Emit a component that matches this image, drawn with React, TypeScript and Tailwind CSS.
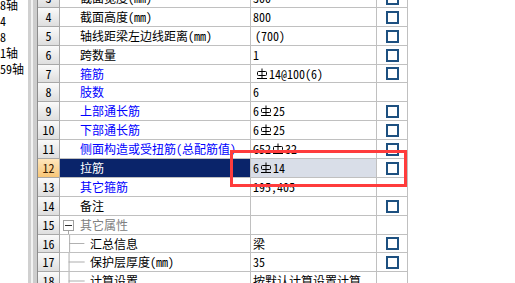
import React from "react";

type Row = {
  n: number;
  name: string;
  value: string;
  cb: boolean;
  h: string;
  kind?: "blue" | "sel" | "group" | "child" | "plain";
  vpad?: string;
};

const rows: Row[] = [
  { n: 3, name: "截面宽度(mm)", value: "300", cb: true, h: "h-[19px]" },
  { n: 4, name: "截面高度(mm)", value: "800", cb: true, h: "h-[19px]" },
  { n: 5, name: "轴线距梁左边线距离(mm)", value: "(700)", cb: true, h: "h-[19px]", vpad: "pl-[4px]" },
  { n: 6, name: "跨数量", value: "1", cb: true, h: "h-[19px]" },
  { n: 7, name: "箍筋", value: "#14@100(6)", cb: true, h: "h-[18px]", kind: "blue", vpad: "pl-[4px]" },
  { n: 8, name: "肢数", value: "6", cb: false, h: "h-[19px]", kind: "blue" },
  { n: 9, name: "上部通长筋", value: "6#25", cb: true, h: "h-[19px]", kind: "blue" },
  { n: 10, name: "下部通长筋", value: "6#25", cb: true, h: "h-[19px]", kind: "blue" },
  { n: 11, name: "侧面构造或受扭筋(总配筋值)", value: "G52#32", cb: true, h: "h-[19px]", kind: "blue" },
  { n: 12, name: "拉筋", value: "6#14", cb: true, h: "h-[19px]", kind: "sel" },
  { n: 13, name: "其它箍筋", value: "195,405", cb: false, h: "h-[19px]", kind: "blue" },
  { n: 14, name: "备注", value: "", cb: true, h: "h-[19px]" },
  { n: 15, name: "其它属性", value: "", cb: false, h: "h-[19px]", kind: "group" },
  { n: 16, name: "汇总信息", value: "梁", cb: true, h: "h-[18px]", kind: "child" },
  { n: 17, name: "保护层厚度(mm)", value: "35", cb: true, h: "h-[19px]", kind: "child" },
  { n: 18, name: "计算设置", value: "按默认计算设置计算", cb: false, h: "h-[19px]", kind: "child" },
];

function Sym() {
  return (
    <svg width="12" height="12" viewBox="0 0 12 12" className="inline-block shrink-0 mx-[1px]">
      <line x1="6" y1="0.5" x2="6" y2="10.5" stroke="#000" strokeWidth="1" />
      <rect x="1.5" y="3.5" width="9" height="4" rx="1" fill="none" stroke="#000" strokeWidth="1" />
      <line x1="1" y1="10.5" x2="11" y2="10.5" stroke="#000" strokeWidth="1" />
    </svg>
  );
}

function Value({ v }: { v: string }) {
  const parts = v.split("#");
  return (
    <span className="flex items-center whitespace-nowrap">
      {parts.map((p, i) => (
        <React.Fragment key={i}>
          {i > 0 && <Sym />}
          <span>{p}</span>
        </React.Fragment>
      ))}
    </span>
  );
}

function NameCell({ r }: { r: Row }) {
  const base = "w-[191px] shrink-0 border-r border-b border-[#c0c0c0] flex whitespace-nowrap overflow-hidden";
  if (r.kind === "sel") {
    return <div className={`${base} items-center pl-[20px] bg-[#0a246a] text-white`}>{r.name}</div>;
  }
  if (r.kind === "group") {
    return (
      <div className={`${base} items-stretch pl-[3px] text-[#808080]`}>
        <div className="w-[11px] flex flex-col items-start">
          <div className="flex-1" />
          <div className="w-[11px] h-[11px] border border-[#a0a0a0] bg-white flex items-center justify-center">
            <div className="w-[7px] h-px bg-[#303030]" />
          </div>
          <div className="flex-1 w-[6px] border-r border-[#a8a8a8]" />
        </div>
        <div className="flex items-center ml-[6px]">{r.name}</div>
      </div>
    );
  }
  if (r.kind === "child") {
    return (
      <div className={`${base} items-stretch pl-[8px]`}>
        <svg width="22" height="19" viewBox="0 0 22 19" className="shrink-0 self-stretch h-full">
          <line x1="0.5" y1="0" x2="0.5" y2="19" stroke="#a8a8a8" strokeWidth="1" />
          <line x1="0" y1="9.5" x2="17" y2="9.5" stroke="#a8a8a8" strokeWidth="1" />
        </svg>
        <div className="flex items-center">{r.name}</div>
      </div>
    );
  }
  const color = r.kind === "blue" ? "text-[#0000ff]" : "text-black";
  return <div className={`${base} items-center pl-[20px] ${color}`}>{r.name}</div>;
}

export default function App() {
  return (
    <div className="relative w-[515px] h-[283px] overflow-hidden bg-white flex text-[12px] leading-[14px] text-black font-['Noto_Sans_Mono_CJK_SC','Noto_Sans_CJK_SC',sans-serif]">
      {/* left panel */}
      <div className="w-[28px] shrink-0 overflow-hidden flex flex-col mt-[-3px]">
        {["8轴", "4", "8", "1轴", "59轴"].map((t) => (
          <div key={t} className="h-[16px] leading-[16px] whitespace-nowrap">
            {t}
          </div>
        ))}
      </div>
      {/* splitter */}
      <div className="w-[10px] shrink-0 flex">
        <div className="w-[3px] bg-[#d0d0d0]" />
        <div className="w-[2px] bg-[#f2f2f2]" />
        <div className="w-[4px] bg-[#cdcdcd]" />
        <div className="w-px bg-[#8c8c8c]" />
      </div>
      {/* grid */}
      <div className="w-[370px] shrink-0 flex flex-col mt-[-11px]">
        {rows.map((r) => {
          const sel = r.kind === "sel";
          return (
            <div key={r.n} className={`flex shrink-0 ${r.h}`}>
              <div
                className={`w-[22px] shrink-0 border-r border-b border-[#a8a8a8] flex items-center justify-center bg-linear-to-b ${
                  sel ? "from-[#ffe7bd] to-[#f7c676] text-[#3c2000]" : "from-[#fafafa] to-[#dedede]"
                }`}
              >
                {r.n}
              </div>
              <NameCell r={r} />
              <div
                className={`w-[126px] shrink-0 border-r border-b border-[#c0c0c0] flex items-center overflow-hidden ${
                  r.vpad ?? "pl-[2px]"
                } ${sel ? "bg-[#d9dee8]" : ""}`}
              >
                <Value v={r.value} />
              </div>
              <div className="w-[31px] shrink-0 border-r border-b border-[#c0c0c0] flex items-center justify-center">
                {r.cb && <div className="w-[13px] h-[13px] border-2 border-[#1d5080]" />}
              </div>
            </div>
          );
        })}
      </div>
      {/* red highlight */}
      <div className="absolute left-[230px] top-[150px] w-[177px] h-[37px] border-[3px] border-[#ff3c3c]" />
    </div>
  );
}
